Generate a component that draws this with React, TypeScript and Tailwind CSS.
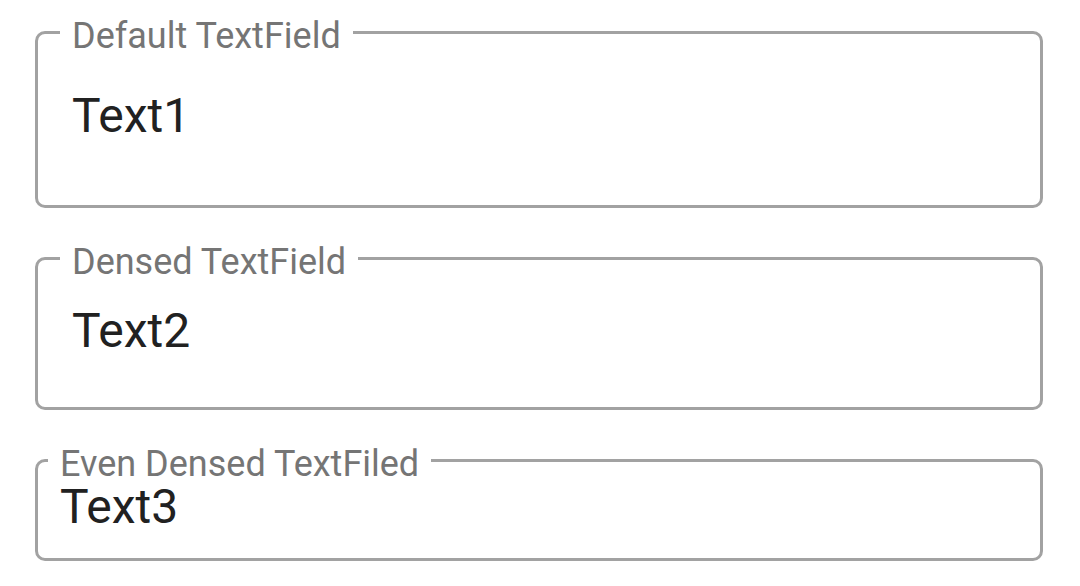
import React from "react";

type FieldProps = {
  label: string;
  value: string;
  bodyClass: string;
  wrapClass: string;
};

const OutlinedField = ({ label, value, bodyClass, wrapClass }: FieldProps) => (
  <fieldset
    className={`ml-[35px] w-[1008px] rounded-[10px] border-[3px] border-solid border-[#a2a2a2] ${wrapClass}`}
  >
    <legend className="px-3 pt-[7px] text-[36px] leading-none text-[#757575]">
      {label}
    </legend>
    <div className={`text-[48px] leading-none text-[#212121] ${bodyClass}`}>
      {value}
    </div>
  </fieldset>
);

const App = () => {
  return (
    <div
      className="h-[586px] w-[1080px] overflow-hidden bg-white"
      style={{ fontFamily: "Roboto, 'Noto Sans', sans-serif" }}
    >
      <div className="flex flex-col">
        {/* Default */}
        <OutlinedField
          label="Default TextField"
          value="Text1"
          wrapClass="mt-[11px] pl-[22px]"
          bodyClass="pl-3 pt-[38px] pb-[65px]"
        />

        {/* Densed */}
        <OutlinedField
          label="Densed TextField"
          value="Text2"
          wrapClass="mt-[29px] pl-[22px]"
          bodyClass="pl-3 pt-[27px] pb-[52px]"
        />

        {/* Even densed */}
        <OutlinedField
          label="Even Densed TextFiled"
          value="Text3"
          wrapClass="mt-[29px] pl-[10px]"
          bodyClass="pl-3 pt-[1px] pb-[27px]"
        />
      </div>
    </div>
  );
};

export default App;
